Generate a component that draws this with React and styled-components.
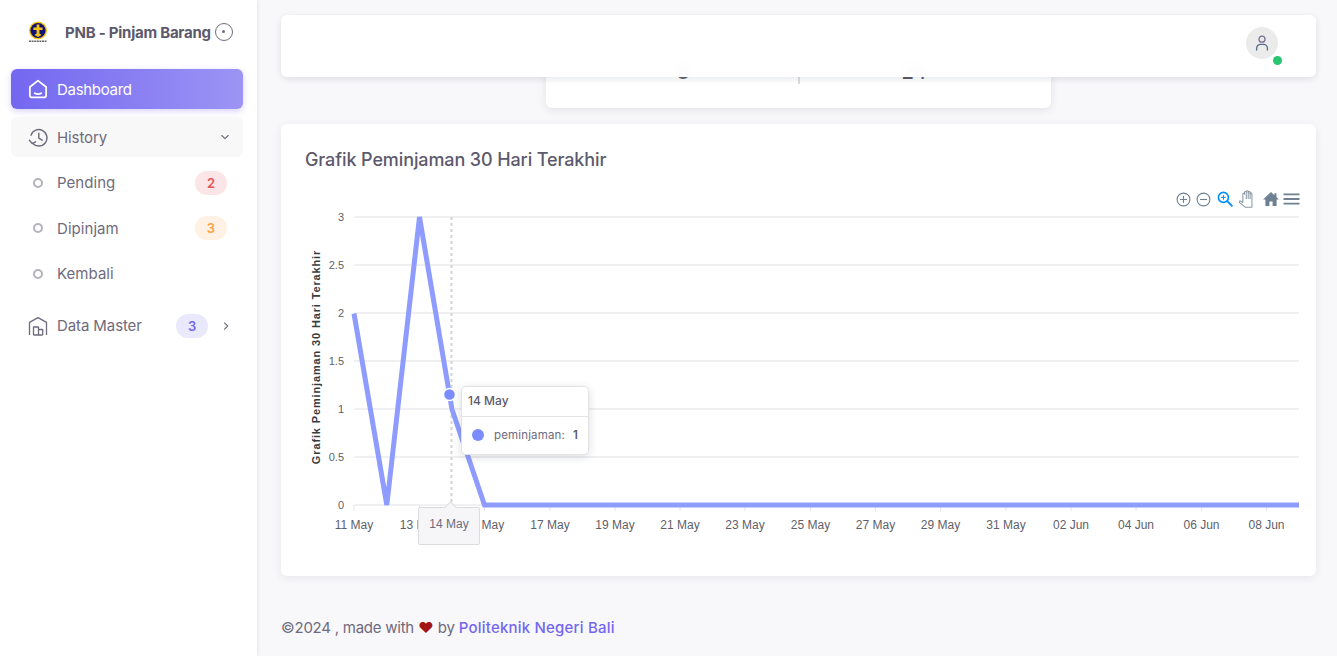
import React from "react";
import styled, { createGlobalStyle } from "styled-components";

const FONT = `"Inter", "Noto Sans", "Liberation Sans", sans-serif`;
const CHART_FONT = `"Liberation Sans", Arial, sans-serif`;

const BODY = "#6f6b7d";
const HEADING = "#5d596c";
const PRIMARY = "#7367f0";

const GlobalStyle = createGlobalStyle`
	html, body {
		margin: 0;
		height: 100%;
		overflow: hidden;
		background: #f8f7fa;
		font-family: ${FONT};
		color: ${BODY};
	}
`;

// chart geometry
const plot = { left: 354, right: 1299, top: 217, bottom: 505 };
const yTicks = ["3", "2.5", "2", "1.5", "1", "0.5", "0"];
const xTicks = [
	["11 May", 354],
	["13 May", 419.5],
	["15 May", 484.5],
	["17 May", 550],
	["19 May", 615],
	["21 May", 680],
	["23 May", 745],
	["25 May", 810.5],
	["27 May", 875.5],
	["29 May", 940.5],
	["31 May", 1006],
	["02 Jun", 1071],
	["04 Jun", 1136],
	["06 Jun", 1201.5],
	["08 Jun", 1266.5],
];

const LogoMark = () => (
	<svg width="24" height="24" viewBox="0 0 24 24">
		<path d="M3 3h18v18H3z" fill="#fff" />
		<circle cx="12" cy="10.5" r="9" fill="#f4c20d" />
		<circle cx="12" cy="10.5" r="7.6" fill="#10107a" />
		<path d="M10.6 4.5h2.8v3h3.2v2.6h-3.2v3.4l2.2 1.5-3.6 2-3.6-2 2.2-1.5v-3.4H7.4V7.5h3.2z" fill="#f4c20d" />
		<path d="M3 21.2h18" stroke="#666" strokeWidth="1.4" strokeDasharray="2 .6" />
	</svg>
);

const HomeIcon = () => (
	<svg width="22" height="22" viewBox="0 0 20 20" fill="none" stroke="#fff" strokeWidth="1.6" strokeLinejoin="round" strokeLinecap="round">
		<path d="M2.6 8.2 10 2.4l7.4 5.8v7.4a2 2 0 0 1-2 2H4.6a2 2 0 0 1-2-2z" />
		<path d="M7 13.8c1.8 1 4.2 1 6 0" />
	</svg>
);

const HistoryIcon = () => (
	<svg width="21" height="21" viewBox="0 0 21 21" fill="none" stroke={BODY} strokeWidth="1.4" strokeLinecap="round" strokeLinejoin="round">
		<path d="M3 8.2A8.2 8.2 0 1 1 4.6 16.2" />
		<path d="M10.8 6.2v5l3.4 2" />
		<path d="M1.4 13.2l2.8 3.4 3.4-1.8" />
	</svg>
);

const StoreIcon = () => (
	<svg width="20" height="20" viewBox="0 0 20 20" fill="none" stroke={BODY} strokeWidth="1.3" strokeLinejoin="round">
		<path d="M1.5 19V6.4L10 1.6l8.5 4.8V19" />
		<path d="M5.5 19v-8h5v8M10.5 19v-5.5h4.2V19M5.5 19h9.2" />
	</svg>
);

const Chevron = ({ dir }) => (
	<svg width="12" height="12" viewBox="0 0 12 12" fill="none" stroke={BODY} strokeWidth="1.1" strokeLinecap="round" strokeLinejoin="round">
		<path d={dir === "down" ? "M2.8 4.5 6 7.7l3.2-3.2" : "M4.5 2.8 7.7 6l-3.2 3.2"} />
	</svg>
);

const UserIcon = () => (
	<svg width="18" height="18" viewBox="0 0 18 18" fill="none" strokeWidth="1.3" strokeLinecap="round">
		<circle cx="9" cy="5.2" r="3" stroke="#7c6f92" />
		<path d="M3.6 16v-1.6a4 4 0 0 1 4-4h2.8a4 4 0 0 1 4 4V16" stroke="#5a6b8c" />
	</svg>
);

const ToolbarIcons = () => (
	<Toolbar>
		<svg width="15" height="15" viewBox="0 0 15 15" fill="none" stroke="#6e8192" strokeWidth="1.1">
			<circle cx="7.5" cy="7.5" r="6.4" />
			<path d="M4 7.5h7M7.5 4v7" />
		</svg>
		<svg width="15" height="15" viewBox="0 0 15 15" fill="none" stroke="#6e8192" strokeWidth="1.1">
			<circle cx="7.5" cy="7.5" r="6.4" />
			<path d="M4 7.5h7" />
		</svg>
		<svg width="18" height="18" viewBox="0 0 18 18" fill="none" stroke="#008ffb" strokeWidth="1.6">
			<circle cx="7.4" cy="7.4" r="5" />
			<path d="M11.2 11.2l5.2 5.2" strokeWidth="1.9" />
			<path d="M5 7.4h4.8M7.4 5v4.8" strokeWidth="1" />
		</svg>
		<svg width="16" height="18" viewBox="0.5 1 12.5 14" fill="#fff" stroke="#8a98a5" strokeWidth="0.8" strokeLinejoin="round">
			<path d="M1.5 9.5l2 1.2V4.2c0-.9 1.3-.9 1.3 0v-1.4c0-.9 1.4-.9 1.4 0v-.6c0-.9 1.5-.9 1.5 0v.6c0-.9 1.5-.9 1.5 0V4c0-.8 1.4-.8 1.4 0v10.5H5.5L1 10.8c-.5-.7 0-1.6.5-1.3z" />
			<path d="M6.2 3v5M7.7 2.4V8M9.2 3v5" />
		</svg>
		<svg width="18" height="16" viewBox="0 0 18 16" fill="#6e8192">
			<path d="M9 1 1 8.4h2.4V15h4v-4.4h3.2V15h4V8.4H17l-2.6-2.4V2.2h-2v2z" />
		</svg>
		<svg width="17" height="14" viewBox="0 0 17 14" fill="#6e8192">
			<path d="M.5 1.5h16v1.8H.5zM.5 6.1h16v1.8H.5zM.5 10.7h16v1.8H.5z" />
		</svg>
	</Toolbar>
);

const LineChart = () => {
	const stepY = (plot.bottom - plot.top) / 6;
	const line = `M354 313.5 L386.8 505 L419.5 217 L452 409.5 L484.5 505 L${plot.right} 505`;

	return (
		<ChartSvg width="1035" height="360" viewBox="281 190 1035 360">
			{yTicks.map((label, i) => {
				const y = plot.top + i * stepY;
				return (
					<g key={label}>
						<line x1={plot.left} x2={plot.right} y1={y} y2={y} stroke="#ebebee" strokeWidth="1.6" />
						<text x="344" y={y + 4} fontSize="11" fill="#5f5f6a" textAnchor="end">{label}</text>
					</g>
				);
			})}
			{xTicks.map(([label, x]) => (
				<g key={label}>
					<line x1={x} x2={x} y1={505} y2={511} stroke="#e4e4e7" />
					<text x={x} y="529" fontSize="12" fill="#5f5f6a" textAnchor="middle">{label}</text>
				</g>
			))}
			<text
				transform="translate(320 357) rotate(-90)"
				fontSize="11"
				fontWeight="700"
				fill="#373d3f"
				textAnchor="middle"
				letterSpacing="0.86"
			>
				Grafik Peminjaman 30 Hari Terakhir
			</text>
			<line x1="451.5" x2="451.5" y1={plot.top} y2={plot.bottom} stroke="#d4d4d8" strokeWidth="2" strokeDasharray="3 3" />
			<path d={line} fill="none" stroke="#8f9cff" strokeWidth="5" strokeLinejoin="miter" />
			<circle cx="449.5" cy="394.5" r="6" fill="#7b8cff" stroke="#fff" strokeWidth="1.5" />
		</ChartSvg>
	);
};

const App = () => (
	<Shell>
		<GlobalStyle />
		<Sidebar>
			<Brand>
				<LogoMark />
				<BrandName>PNB - Pinjam Barang</BrandName>
				<BrandToggle />
			</Brand>
			<Menu>
				<ActiveItem>
					<HomeIcon />
					<span>Dashboard</span>
				</ActiveItem>
				<OpenItem>
					<HistoryIcon />
					<span>History</span>
					<ChevronSlot><Chevron dir="down" /></ChevronSlot>
				</OpenItem>
				<SubItem>
					<Dot />
					<span>Pending</span>
					<Badge $bg="#fce5e6" $fg="#ea5455">2</Badge>
				</SubItem>
				<SubItem>
					<Dot />
					<span>Dipinjam</span>
					<Badge $bg="#fff1e3" $fg="#ff9f43">3</Badge>
				</SubItem>
				<SubItem>
					<Dot />
					<span>Kembali</span>
				</SubItem>
				<MasterItem>
					<StoreIcon />
					<span>Data Master</span>
					<MasterBadge $bg="#eae8fd" $fg={PRIMARY}>3</MasterBadge>
					<Chevron dir="right" />
				</MasterItem>
			</Menu>
		</Sidebar>
		<Main>
			<Navbar>
				<Avatar>
					<UserIcon />
					<OnlineDot />
				</Avatar>
			</Navbar>
			<StatCard>
				<StatValue>8</StatValue>
				<StatDivider />
				<StatValue>24</StatValue>
			</StatCard>
			<ChartCard>
				<ChartTitle>Grafik Peminjaman 30 Hari Terakhir</ChartTitle>
				<ChartArea>
					<ToolbarIcons />
					<LineChart />
					<Tooltip>
						<TooltipTitle>14 May</TooltipTitle>
						<TooltipBody>
							<TooltipMarker />
							<TooltipLabel>peminjaman:</TooltipLabel>
							<TooltipValue>1</TooltipValue>
						</TooltipBody>
					</Tooltip>
					<XCrosshair>14 May</XCrosshair>
				</ChartArea>
			</ChartCard>
			<Footer>
				<FooterText>©2024 , made with</FooterText> <Heart>♥</Heart> <FooterText>by</FooterText> <FooterLink>Politeknik Negeri Bali</FooterLink>
			</Footer>
		</Main>
	</Shell>
);

export default App;

const Shell = styled.div`
	display: flex;
	height: 656px;
	overflow: hidden;
`;

const Sidebar = styled.aside`
	width: 257px;
	flex: none;
	background: #fff;
	box-shadow: 0 0 4px rgba(34, 48, 62, 0.14);
	z-index: 3;
`;

const Brand = styled.div`
	display: flex;
	align-items: center;
	height: 64px;
	padding-left: 26px;
	box-sizing: border-box;
`;

const BrandName = styled.span`
	margin-left: 15px;
	font-size: 15px;
	font-weight: 700;
	letter-spacing: -0.24px;
	color: ${HEADING};
	white-space: nowrap;
`;

const BrandToggle = styled.span`
	position: relative;
	margin-left: 4px;
	width: 18px;
	height: 18px;
	border: 1.3px solid ${BODY};
	border-radius: 50%;
	box-sizing: border-box;
	&::after {
		content: "";
		position: absolute;
		left: 6.2px;
		top: 6.2px;
		width: 3px;
		height: 3px;
		border-radius: 50%;
		background: ${BODY};
	}
`;

const Menu = styled.nav`
	display: flex;
	flex-direction: column;
	padding: 5px 14px 0 11px;
`;

const ActiveItem = styled.div`
	display: flex;
	align-items: center;
	gap: 8px;
	height: 40px;
	padding-left: 16px;
	border-radius: 6px;
	background: linear-gradient(270deg, rgba(115, 103, 240, 0.7) 0%, ${PRIMARY} 100%);
	box-shadow: 0 2px 6px rgba(115, 103, 240, 0.3);
	color: #fff;
	font-size: 15px;
	letter-spacing: -0.3px;
`;

const OpenItem = styled.div`
	display: flex;
	align-items: center;
	gap: 8px;
	height: 40px;
	margin-top: 8px;
	padding: 0 12px 0 17px;
	border-radius: 6px;
	background: #f8f8f8;
	font-size: 15px;
	letter-spacing: -0.1px;
`;

const ChevronSlot = styled.span`
	display: flex;
	margin-left: auto;
`;

const SubItem = styled.div`
	display: flex;
	align-items: center;
	height: 45.5px;
	padding: 0 16px 0 22px;
	font-size: 15px;
	letter-spacing: 0.05px;
	&:nth-child(3) {
		margin-top: 3px;
	}
`;

const Dot = styled.span`
	width: 10px;
	height: 10px;
	margin-right: 14px;
	border: 2px solid #b4b2bc;
	border-radius: 50%;
	box-sizing: border-box;
`;

const Badge = styled.span`
	display: flex;
	align-items: center;
	justify-content: center;
	width: 32px;
	height: 24px;
	margin-left: auto;
	border-radius: 12px;
	background: ${(p) => p.$bg};
	color: ${(p) => p.$fg};
	font-size: 13px;
	font-weight: 600;
`;

const MasterBadge = styled(Badge)`
	margin-right: 4px;
`;

const MasterItem = styled.div`
	display: flex;
	align-items: center;
	gap: 9px;
	height: 40px;
	margin-top: 9px;
	padding: 0 11px 0 17px;
	font-size: 15px;
	letter-spacing: -0.1px;
	& > svg:last-child {
		margin-left: -1px;
	}
`;

const Main = styled.main`
	position: relative;
	flex: 1;
	display: flex;
	flex-direction: column;
	align-items: stretch;
	padding: 0 21px 0 24px;
`;

const Navbar = styled.header`
	position: absolute;
	left: 24px;
	right: 21px;
	top: 15px;
	height: 62px;
	z-index: 2;
	display: flex;
	align-items: center;
	justify-content: flex-end;
	box-sizing: border-box;
	padding: 0 38px 6px 0;
	border-radius: 6px;
	background: rgba(255, 255, 255, 0.95);
	backdrop-filter: blur(6px);
	box-shadow: 0 2px 6px rgba(34, 48, 62, 0.12);
`;

const Avatar = styled.div`
	position: relative;
	display: flex;
	align-items: center;
	justify-content: center;
	width: 32px;
	height: 32px;
	border-radius: 50%;
	background: #ebebeb;
`;

const OnlineDot = styled.span`
	position: absolute;
	right: -4px;
	bottom: -6px;
	width: 9px;
	height: 9px;
	border-radius: 50%;
	background: #28c76f;
`;

const StatCard = styled.section`
	align-self: center;
	display: flex;
	align-items: flex-end;
	justify-content: center;
	box-sizing: border-box;
	width: 505px;
	height: 88px;
	margin-top: 20px;
	padding-bottom: 27px;
	border-radius: 6px;
	background: #fff;
	box-shadow: 0 2px 8px rgba(34, 48, 62, 0.1);
`;

const StatValue = styled.span`
	width: 229px;
	text-align: center;
	font-size: 20px;
	line-height: 18px;
	font-weight: 500;
	color: ${HEADING};
`;

const StatDivider = styled.span`
	width: 2px;
	height: 20px;
	margin-bottom: -3px;
	background: #dbdadf;
`;

const ChartCard = styled.section`
	display: flex;
	flex-direction: column;
	height: 452px;
	margin-top: 16px;
	border-radius: 6px;
	background: #fff;
	box-shadow: 0 2px 8px rgba(34, 48, 62, 0.08);
`;

const ChartTitle = styled.h5`
	margin: 0;
	padding: 24px 24px 0;
	font-size: 18px;
	line-height: 24px;
	font-weight: 500;
	letter-spacing: -0.11px;
	color: ${HEADING};
`;

const ChartArea = styled.div`
	position: relative;
	flex: 1;
`;

const ChartSvg = styled.svg`
	position: absolute;
	left: 0;
	top: 18px;
	font-family: ${CHART_FONT};
`;

const Toolbar = styled.div`
	position: absolute;
	right: 16px;
	top: 18px;
	z-index: 1;
	display: flex;
	align-items: center;
	gap: 5px;
	height: 18px;
	svg:nth-child(5) {
		margin: 0 -2px 0 2px;
	}
`;

const Tooltip = styled.div`
	position: absolute;
	left: 180px;
	top: 214px;
	width: 128px;
	height: 69px;
	box-sizing: border-box;
	border: 1px solid #e3e3e6;
	border-radius: 5px;
	background: #fff;
	box-shadow: 0 2px 8px rgba(34, 48, 62, 0.16);
	font-size: 12px;
`;

const TooltipTitle = styled.div`
	height: 29px;
	padding-left: 6px;
	line-height: 27px;
	border-bottom: 1px solid #e3e3e6;
	font-weight: 500;
	color: ${HEADING};
`;

const TooltipBody = styled.div`
	display: flex;
	align-items: center;
	height: 36px;
	padding-left: 10px;
`;

const TooltipMarker = styled.span`
	width: 12px;
	height: 12px;
	margin-right: 10px;
	border-radius: 50%;
	background: #7b8cff;
`;

const TooltipLabel = styled.span`
	color: ${BODY};
	font-size: 11.5px;
	letter-spacing: 0.15px;
`;

const TooltipValue = styled.span`
	margin-left: 8px;
	font-weight: 600;
	color: ${HEADING};
	font-size: 11.5px;
`;

const XCrosshair = styled.div`
	position: absolute;
	left: 137px;
	top: 335px;
	width: 62px;
	height: 38px;
	box-sizing: border-box;
	padding-top: 9px;
	border: 1px solid #dcdce0;
	border-radius: 2px;
	background: #f6f6f8;
	text-align: center;
	font-family: ${CHART_FONT};
	font-size: 12px;
	color: ${BODY};
	&::before {
		content: "";
		position: absolute;
		left: 27px;
		top: -5px;
		width: 8px;
		height: 8px;
		background: #f6f6f8;
		border-left: 1px solid #dcdce0;
		border-top: 1px solid #dcdce0;
		transform: rotate(45deg);
	}
`;

const Footer = styled.footer`
	margin-top: 41px;
	font-size: 15px;
	line-height: 22px;
	color: ${BODY};
	white-space: nowrap;
`;

const FooterText = styled.span`
	letter-spacing: -0.24px;
`;

const Heart = styled.span`
	color: #a31515;
`;

const FooterLink = styled.a`
	color: ${PRIMARY};
	font-weight: 500;
	letter-spacing: 0.2px;
`;
